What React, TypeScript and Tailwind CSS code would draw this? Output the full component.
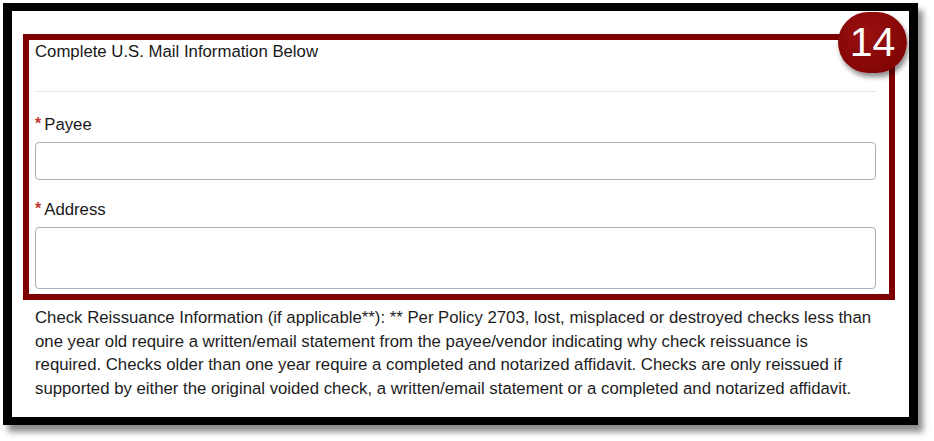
import React from 'react';

const Label = ({ text }: { text: string }) => (
  <div className="flex items-start h-[20px] leading-[20px] mt-[1px]">
    <span className="text-[#c23934] text-[16px] leading-[14px] mr-[3px] mt-[2px] font-bold">*</span>
    <span className="text-[16.75px] text-[#181818]">{text}</span>
  </div>
);

const App = () => {
  return (
    <div
      className="w-[934px] h-[441px] bg-white pt-[3px] pl-[3px]"
      style={{ fontFamily: '"Liberation Sans", Arial, sans-serif' }}
    >
      <div className="w-[915px] h-[422px] border-x-[9px] border-y-[8px] border-black bg-white shadow-[5px_7px_6px_rgba(0,0,0,0.45)]">
        <div className="pl-[11px] pt-[23px]">
          {/* Highlighted section */}
          <div className="relative w-[872px] h-[266px] border-[6px] border-[#7f0000] pl-[6px] pr-[13px] pt-[3px]">
            <div className="text-[16.75px] leading-[18px] text-[#181818]">
              Complete U.S. Mail Information Below
            </div>
            <div className="h-px bg-[#e3e3e8] mt-[30px]" />

            <div className="mt-[23px]">
              <Label text="Payee" />
              <div className="mt-[7px] h-[38px] rounded-[4px] border border-[#aab0bb] bg-white" />
            </div>

            <div className="mt-[20px]">
              <Label text="Address" />
              <div className="mt-[7px] h-[62px] rounded-[4px] border border-[#aab0bb] bg-white" />
            </div>

            {/* Step badge */}
            <div className="absolute left-[809px] top-[-28px] w-[69px] h-[61px] rounded-full bg-[radial-gradient(circle_at_40%_35%,#9a1010,#7a0000)] shadow-[2px_4px_5px_rgba(0,0,0,0.45)] flex items-center justify-center">
              <span className="text-white text-[41px] leading-none">14</span>
            </div>
          </div>

          <p className="mt-[6px] pl-[12px] text-[16.75px] leading-[23.7px] text-[#1c1c1c] whitespace-nowrap">
            Check Reissuance Information (if applicable**): ** Per Policy 2703, lost, misplaced or destroyed checks less than
            <br />
            one year old require a written/email statement from the payee/vendor indicating why check reissuance is
            <br />
            required. Checks older than one year require a completed and notarized affidavit. Checks are only reissued if
            <br />
            supported by either the original voided check, a written/email statement or a completed and notarized affidavit.
          </p>
        </div>
      </div>
    </div>
  );
};

export default App;
